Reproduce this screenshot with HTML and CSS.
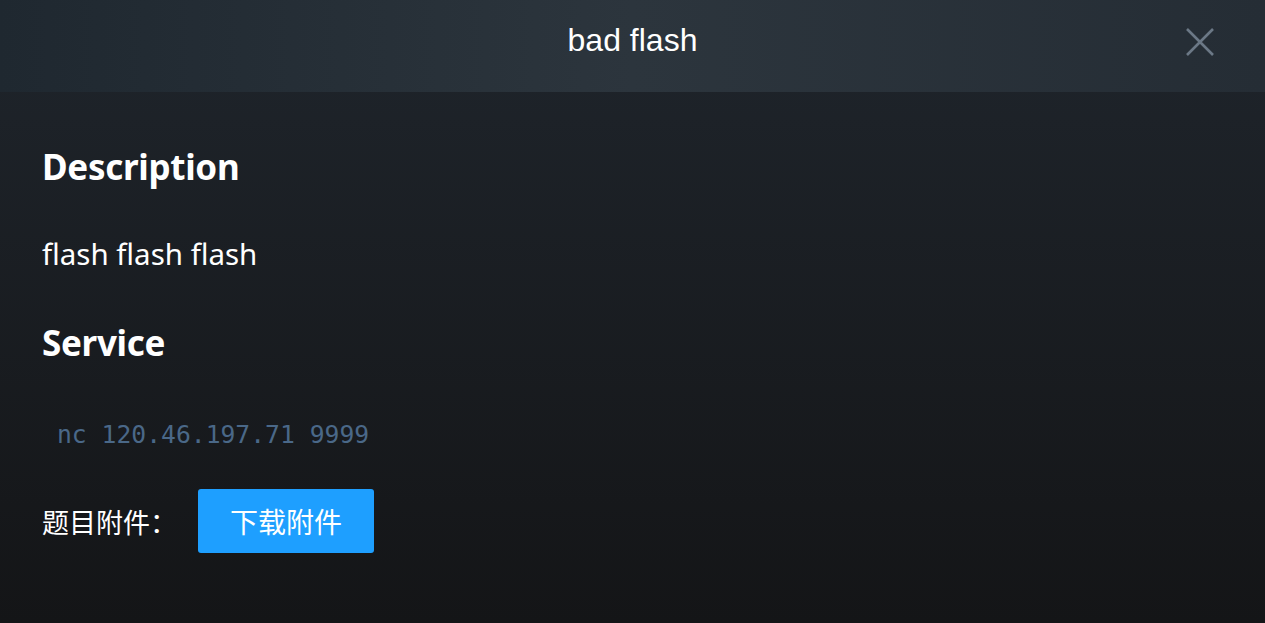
FILE: index.html
```html
<!DOCTYPE html>
<html lang="zh">
<head>
<meta charset="utf-8">
<title>bad flash</title>
<link rel="stylesheet" href="styles.css">
</head>
<body>
<div class="dialog">
  <header class="dialog-head">
    <h1 class="dialog-title">bad flash</h1>
    <button class="close" aria-label="close">
      <svg width="30" height="30" viewBox="0 0 30 30"><path d="M2 2 L28 28 M28 2 L2 28" stroke="#6b7886" stroke-width="2.6" fill="none"/></svg>
    </button>
  </header>
  <main class="dialog-body">
    <h2 class="section-title">Description</h2>
    <p class="desc">flash flash flash</p>
    <h2 class="section-title">Service</h2>
    <code class="service">nc 120.46.197.71 9999</code>
    <div class="attach">
      <span class="attach-label">题目附件：</span>
      <a class="btn" href="#">下载附件</a>
    </div>
  </main>
</div>
</body>
</html>
```

FILE: styles.css
```css
html, body {
  margin: 0;
  padding: 0;
  height: 100%;
}
body {
  background: linear-gradient(180deg, #1f252c 0%, #141517 100%);
  font-family: "Noto Sans", "Open Sans", "Noto Sans CJK SC", sans-serif;
  color: #fff;
  overflow: hidden;
}
.dialog {
  display: flex;
  flex-direction: column;
  height: 100%;
}
.dialog-head {
  height: 92px;
  flex: none;
  display: flex;
  align-items: center;
  justify-content: center;
  position: relative;
  background: linear-gradient(90deg, #1f2830 0%, #2c353d 50%, #252d35 100%);
}
.dialog-title {
  margin: 0;
  font-family: "Liberation Sans", Arial, sans-serif;
  font-weight: normal;
  font-size: 32px;
  color: #fff;
  padding-bottom: 11px;
}
.close {
  position: absolute;
  right: 50px;
  top: 27px;
  width: 30px;
  height: 30px;
  padding: 0;
  border: 0;
  background: none;
}
.close svg { display: block; }
.dialog-body {
  padding: 52px 42px 0;
  display: flex;
  flex-direction: column;
  align-items: flex-start;
}
.section-title {
  margin: 0;
  font-size: 35px;
  font-weight: 700;
  line-height: 46px;
  letter-spacing: -0.3px;
}
.desc {
  margin: 46px 0 48px;
  font-size: 29.5px;
  line-height: 36px;
}
.service {
  margin: 53px 0 0 15px;
  font-family: "DejaVu Sans Mono", "Liberation Mono", monospace;
  font-size: 24.7px;
  line-height: 32px;
  color: #4a6888;
}
.attach {
  margin-top: 38px;
  display: flex;
  align-items: center;
}
.attach-label {
  font-family: "Noto Sans CJK SC", sans-serif;
  font-size: 27px;
  width: 156px;
}
.btn {
  width: 176px;
  height: 64px;
  display: flex;
  align-items: center;
  justify-content: center;
  background: #1e9fff;
  color: #fff;
  border-radius: 3px;
  text-decoration: none;
  font-family: "Noto Sans CJK SC", sans-serif;
  font-size: 28px;
}
```
